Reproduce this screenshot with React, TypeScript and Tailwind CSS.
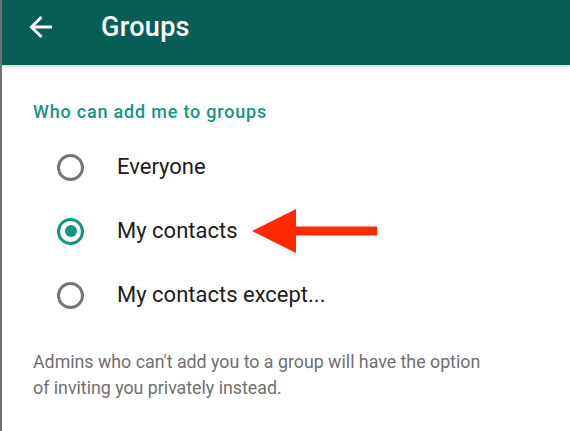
import { useState } from "react";

const OPTIONS = ["Everyone", "My contacts", "My contacts except..."];

function Radio({ checked }: { checked: boolean }) {
  return (
    <span
      className={`flex h-[27px] w-[27px] shrink-0 items-center justify-center rounded-full border-[3px] ${
        checked ? "border-[#179583]" : "border-[#767676]"
      }`}
    >
      {checked && <span className="h-[12px] w-[12px] rounded-full bg-[#179583]" />}
    </span>
  );
}

export default function App() {
  const [selected, setSelected] = useState(1);

  return (
    <div
      className="flex h-[431px] w-[570px] flex-col overflow-hidden border-l-2 border-[#737373] bg-white"
      style={{ fontFamily: "Roboto, 'Noto Sans', sans-serif" }}
    >
      <header className="relative z-10 flex h-[65px] shrink-0 items-center bg-[#075e54] pb-[11px] pl-[27px] shadow-[0_2px_4px_rgba(0,0,0,0.18)]">
        <svg width="24" height="24" viewBox="0 0 24 24" fill="none" stroke="white" strokeWidth={3} className="shrink-0">
          <path d="M23 12H3" />
          <path d="M12.5 2 L2.5 12 L12.5 22" strokeLinejoin="miter" />
        </svg>
        <h1 className="ml-[48px] text-[27px] font-medium leading-none tracking-[0.3px] text-white">Groups</h1>
      </header>

      <main className="flex flex-col pl-[31px] pt-[35px]">
        <h2 className="text-[18px] font-medium leading-[24px] tracking-[0.8px] text-[#179583]">
          Who can add me to groups
        </h2>

        <div className="mt-[11px] flex flex-col">
          {OPTIONS.map((label, i) => (
            <button
              key={label}
              onClick={() => setSelected(i)}
              className="flex h-[64px] items-center pl-[24px] text-left"
            >
              <Radio checked={selected === i} />
              <span className="ml-[33px] text-[22px] leading-[64px] text-[#1c1c1c]">{label}</span>
              {i === 1 && (
                <svg width="125" height="44" viewBox="0 0 125 44" className="ml-[14px] shrink-0">
                  <polygon points="0,22 44,0 44,44" fill="#fe2a06" />
                  <rect x="43" y="17.5" width="82" height="9" fill="#fe2a06" />
                </svg>
              )}
            </button>
          ))}
        </div>

        <p className="mt-[22px] pr-[80px] text-[17.8px] leading-[26px] text-[#6f6f6f]">
          Admins who can't add you to a group will have the option of inviting you privately instead.
        </p>
      </main>
    </div>
  );
}
